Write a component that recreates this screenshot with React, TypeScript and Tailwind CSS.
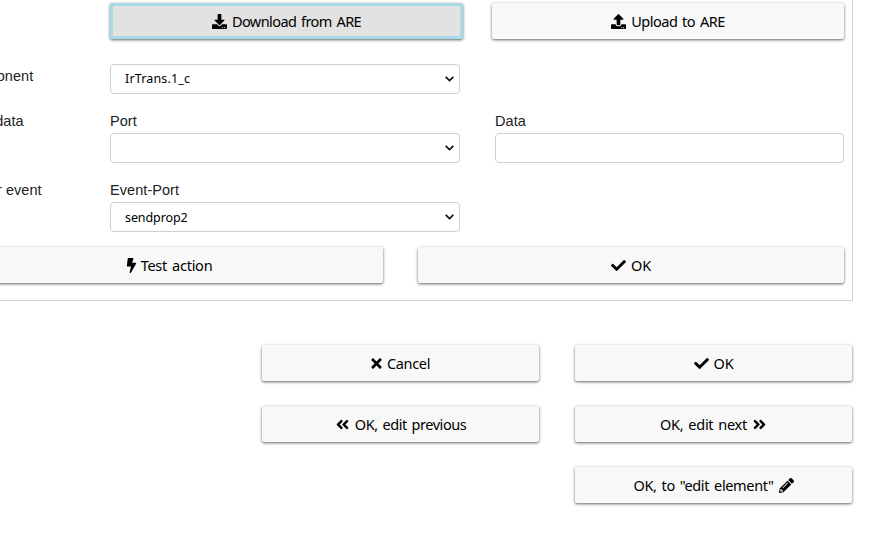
import type { ReactNode } from "react";
import {
  FaAngleDoubleLeft,
  FaAngleDoubleRight,
  FaBolt,
  FaCheck,
  FaDownload,
  FaPencilAlt,
  FaTimes,
  FaUpload,
} from "react-icons/fa";

const buttonText =
  "font-['Noto_Sans',sans-serif] text-[14.5px] leading-[36px] [word-spacing:1.5px] text-black";

function Button({
  className,
  active = false,
  before,
  after,
  children,
}: {
  className: string;
  active?: boolean;
  before?: ReactNode;
  after?: ReactNode;
  children: ReactNode;
}) {
  const look = active
    ? "bg-[#e2e2e2] outline-3 -outline-offset-3 outline-[#a8dae8]"
    : "bg-[#f8f8f8]";
  return (
    <button
      className={`flex h-9 shrink-0 items-center justify-center gap-[5px] whitespace-nowrap rounded-[2px] shadow-[0_1px_3px_#5c6563] ${buttonText} ${look} ${className}`}
    >
      {before}
      <span>{children}</span>
      {after}
    </button>
  );
}

function Select({ value = "", className = "" }: { value?: string; className?: string }) {
  return (
    <div
      className={`flex h-[30px] w-[350px] items-center justify-between rounded-[4px] border border-[#d1d1d1] bg-white pl-[14px] pr-[5px] font-['Noto_Sans',sans-serif] text-[12.5px] text-black ${className}`}
    >
      <span className="pt-px">{value}</span>
      <svg width="9" height="6" viewBox="0 0 9 6" fill="none" stroke="#111" strokeWidth="1.7">
        <path d="M0.7 0.8 4.5 4.5 8.3 0.8" />
      </svg>
    </div>
  );
}

export default function App() {
  return (
    <div className="h-[536px] w-[891px] overflow-hidden bg-white font-['Liberation_Sans',sans-serif] text-[14.5px] tracking-[0.06px] text-[#222]">
      <section className="h-[301px] w-[853px] border-b border-r border-[#d1d1d1] pt-[3px]">
        <div className="flex gap-[29px] pl-[110px]">
          <Button className="w-[353px] tracking-[-0.57px]" active before={<FaDownload size={15} />}>
            Download from ARE
          </Button>
          <Button className="w-[352px] tracking-[-0.5px]" before={<FaUpload size={15} />}>
            Upload to ARE
          </Button>
        </div>

        <div className="mt-[25px] flex h-[30px]">
          <div className="flex w-[110px] shrink-0 justify-start leading-6">
            <span className="-ml-[39px]">component</span>
          </div>
          <Select value="IrTrans.1_c" className="tracking-[0.15px]" />
        </div>

        <div className="mt-[15px] flex leading-6">
          <div className="flex w-[110px] shrink-0">
            <span className="-ml-[43px] whitespace-nowrap">Send data</span>
          </div>
          <div className="w-[385px] shrink-0">
            <label className="block">Port</label>
            <Select />
          </div>
          <div>
            <label className="block">Data</label>
            <div className="h-[30px] w-[349px] rounded-[4px] border border-[#d1d1d1]" />
          </div>
        </div>

        <div className="mt-[15px] flex leading-6">
          <div className="flex w-[110px] shrink-0">
            <span className="-ml-[44px] whitespace-nowrap">Trigger event</span>
          </div>
          <div>
            <label className="block">Event-Port</label>
            <Select value="sendprop2" className="tracking-[-0.1px]" />
          </div>
        </div>

        <div className="-ml-[44px] mt-[15px] flex gap-[35px]">
          <Button
            className="w-[427px] tracking-[-0.25px]"
            before={<FaBolt size={15} className="-mx-[3px]" />}
          >
            Test action
          </Button>
          <Button className="w-[426px] tracking-[-0.2px]" before={<FaCheck size={15} />}>
            OK
          </Button>
        </div>
      </section>

      <div className="mt-[44px] grid grid-cols-[278px_278px] gap-x-[35px] gap-y-[25px] pl-[262px]">
        <Button
          className="w-[277px] tracking-[-0.33px]"
          before={<FaTimes size={15} className="-mx-[2px]" />}
        >
          Cancel
        </Button>
        <Button className="w-[277px] tracking-[-0.2px]" before={<FaCheck size={15} />}>
          OK
        </Button>
        <Button className="w-[277px] tracking-[-0.45px]" before={<FaAngleDoubleLeft size={15} />}>
          OK, edit previous
        </Button>
        <Button className="w-[277px] tracking-[-0.28px]" after={<FaAngleDoubleRight size={15} />}>
          OK, edit next
        </Button>
        <Button
          className="col-start-2 w-[277px] tracking-[-0.35px]"
          after={<FaPencilAlt size={15} />}
        >
          OK, to &quot;edit element&quot;
        </Button>
      </div>
    </div>
  );
}
